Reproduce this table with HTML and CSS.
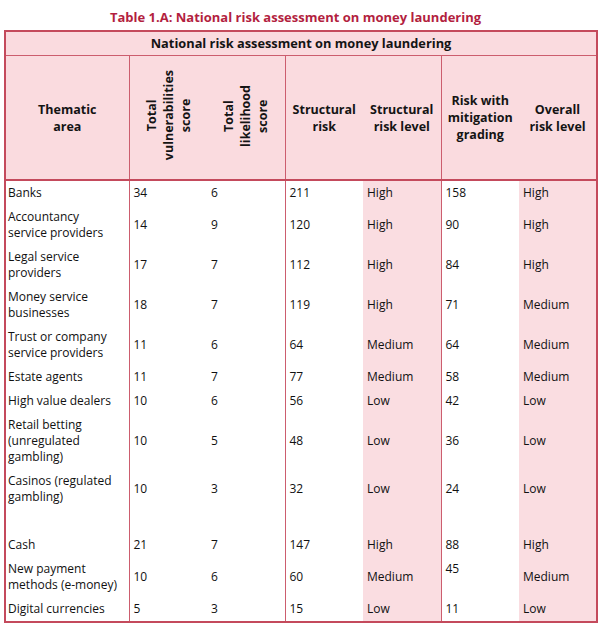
FILE: index.html
```html
<!DOCTYPE html>
<html>
<head>
<meta charset="utf-8">
<link rel="stylesheet" href="styles.css">
</head>
<body>
<div class="title">Table 1.A: National risk assessment on money laundering</div>
<table class="nra">
  <colgroup>
    <col class="c-area"><col class="c-num"><col class="c-num"><col class="c-num"><col class="c-num"><col class="c-num"><col class="c-num">
  </colgroup>
  <thead>
    <tr class="head-top">
      <th colspan="7">National risk assessment on money laundering</th>
    </tr>
    <tr class="head-cols">
      <th>Thematic<br>area</th>
      <th class="grp"><span class="vert">Total<br>vulnerabilities<br>score</span></th>
      <th><span class="vert">Total<br>likelihood<br>score</span></th>
      <th class="grp">Structural<br>risk</th>
      <th>Structural<br>risk level</th>
      <th class="grp">Risk with<br>mitigation<br>grading</th>
      <th>Overall<br>risk level</th>
    </tr>
  </thead>
  <tbody>
    <tr><td class="area">Banks</td><td class="grp">34</td><td>6</td><td class="grp">211</td><td class="lvl">High</td><td class="grp">158</td><td class="lvl">High</td></tr>
    <tr><td class="area">Accountancy<br>service providers</td><td class="grp">14</td><td>9</td><td class="grp">120</td><td class="lvl">High</td><td class="grp">90</td><td class="lvl">High</td></tr>
    <tr><td class="area">Legal service<br>providers</td><td class="grp">17</td><td>7</td><td class="grp">112</td><td class="lvl">High</td><td class="grp">84</td><td class="lvl">High</td></tr>
    <tr><td class="area">Money service<br>businesses</td><td class="grp">18</td><td>7</td><td class="grp">119</td><td class="lvl">High</td><td class="grp">71</td><td class="lvl">Medium</td></tr>
    <tr><td class="area">Trust or company<br>service providers</td><td class="grp">11</td><td>6</td><td class="grp">64</td><td class="lvl">Medium</td><td class="grp">64</td><td class="lvl">Medium</td></tr>
    <tr><td class="area">Estate agents</td><td class="grp">11</td><td>7</td><td class="grp">77</td><td class="lvl">Medium</td><td class="grp">58</td><td class="lvl">Medium</td></tr>
    <tr><td class="area">High value dealers</td><td class="grp">10</td><td>6</td><td class="grp">56</td><td class="lvl">Low</td><td class="grp">42</td><td class="lvl">Low</td></tr>
    <tr><td class="area">Retail betting<br>(unregulated<br>gambling)</td><td class="grp">10</td><td>5</td><td class="grp">48</td><td class="lvl">Low</td><td class="grp">36</td><td class="lvl">Low</td></tr>
    <tr><td class="area">Casinos (regulated<br>gambling)</td><td class="grp">10</td><td>3</td><td class="grp">32</td><td class="lvl">Low</td><td class="grp">24</td><td class="lvl">Low</td></tr>
    <tr class="blank"><td class="area">&nbsp;</td><td class="grp"></td><td></td><td class="grp"></td><td class="lvl"></td><td class="grp"></td><td class="lvl"></td></tr>
    <tr><td class="area">Cash</td><td class="grp">21</td><td>7</td><td class="grp">147</td><td class="lvl">High</td><td class="grp">88</td><td class="lvl">High</td></tr>
    <tr><td class="area">New payment<br>methods (e-money)</td><td class="grp">10</td><td>6</td><td class="grp">60</td><td class="lvl">Medium</td><td class="grp top">45</td><td class="lvl">Medium</td></tr>
    <tr><td class="area">Digital currencies</td><td class="grp">5</td><td>3</td><td class="grp">15</td><td class="lvl">Low</td><td class="grp">11</td><td class="lvl">Low</td></tr>
  </tbody>
</table>
</body>
</html>
```

FILE: styles.css
```css
html, body {
  margin: 0;
  background: #ffffff;
}
body {
  padding: 8px 0 0 4px;
  font-family: "Open Sans", "Liberation Sans", sans-serif;
  color: #111111;
}
.title {
  text-align: center;
  color: #b31f3f;
  font-weight: 700;
  font-size: 13px;
  line-height: 18px;
  margin-bottom: 4px;
  width: 583px;
}
.nra {
  border-collapse: collapse;
  table-layout: fixed;
  width: 593px;
  border: 2px solid #c44a5c;
  font-size: 12px;
}
.c-area { width: 124px; }
.c-num { width: 78px; }
.nra th {
  background: #fadbdf;
  font-weight: 700;
  font-size: 12.5px;
  line-height: 17px;
  text-align: center;
  vertical-align: middle;
  padding: 0 2px;
  color: #141414;
}
.head-top th {
  height: 23px;
  font-size: 12.8px;
  border-bottom: 1px solid #cc5d6e;
}
.head-cols th {
  height: 123px;
  border-bottom: 2px solid #c44a5c;
}
.vert {
  display: inline-block;
  writing-mode: vertical-rl;
  transform: rotate(180deg);
  text-align: center;
}
.nra td {
  padding: 4px 4px;
  line-height: 16px;
  vertical-align: middle;
  text-align: left;
}
.nra td.area {
  padding-left: 2px;
}
.nra .grp {
  border-left: 1px solid #cc5d6e;
}
.nra td.lvl {
  background: #fadde1;
}
.nra td.top {
  vertical-align: top;
}
.blank td {
  height: 16px;
}
```
